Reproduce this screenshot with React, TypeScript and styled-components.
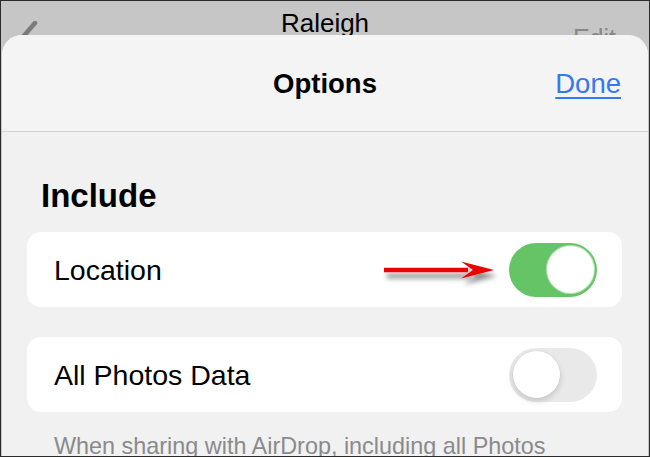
import React from "react";
import styled, { createGlobalStyle } from "styled-components";

const Global = createGlobalStyle`
  html, body { margin: 0; padding: 0; background: #ffffff; }
  #root { width: 650px; height: 457px; }
  * { box-sizing: border-box; }
`;

const Frame = styled.div`
  width: 650px;
  height: 457px;
  border: 1px solid #2b2b2b;
  background: #c6c6c6;
  overflow: hidden;
  display: flex;
  flex-direction: column;
  font-family: "Liberation Sans", Arial, sans-serif;
`;

const TopBar = styled.div`
  height: 34px;
  flex: none;
  overflow: hidden;
  display: grid;
  grid-template-columns: 1fr auto 1fr;
  align-items: start;
`;

const BackSlot = styled.div`
  padding: 20px 0 0 17px;
  display: flex;
`;

const BarTitle = styled.div`
  padding-top: 7px;
  font-size: 26px;
  line-height: 30px;
  color: #000;
`;

const BarAction = styled.div`
  justify-self: end;
  padding: 22px 33px 0 0;
  font-size: 25px;
  line-height: 30px;
  color: #868686;
`;

const Sheet = styled.div`
  flex: 1;
  margin: 0 1px;
  border-radius: 20px 20px 0 0;
  background: #f0f1f0;
  display: flex;
  flex-direction: column;
  overflow: hidden;
`;

const SheetHeader = styled.div`
  height: 97px;
  flex: none;
  background: #f4f4f4;
  border-bottom: 1px solid #d3d3d3;
  display: grid;
  grid-template-columns: 1fr auto 1fr;
  align-items: center;
`;

const SheetTitle = styled.div`
  grid-column: 2;
  font-size: 27.5px;
  font-weight: 700;
  color: #000;
  line-height: 34px;
  padding-top: 2px;
`;

const DoneLink = styled.a`
  justify-self: end;
  margin-right: 27px;
  padding-top: 2px;
  font-size: 27.5px;
  line-height: 34px;
  color: #3478f6;
  text-decoration: underline;
  text-decoration-thickness: 2px;
  text-underline-offset: 4px;
  cursor: pointer;
`;

const SheetBody = styled.div`
  padding: 44px 26px 0 25px;
  display: flex;
  flex-direction: column;
`;

const SectionTitle = styled.div`
  font-size: 33px;
  font-weight: 700;
  line-height: 40px;
  color: #000;
  padding-left: 14px;
  margin-bottom: 16px;
`;

const Card = styled.div<{ $gap?: number }>`
  height: 75px;
  background: #ffffff;
  border-radius: 14px;
  display: flex;
  align-items: center;
  padding: 0 25px 0 27px;
  margin-bottom: ${(p) => p.$gap ?? 0}px;
`;

const RowLabel = styled.div`
  flex: 1;
  font-size: 28.5px;
  line-height: 34px;
  color: #000;
`;

const Arrow = styled.svg`
  flex: none;
  margin-right: 9px;
  overflow: visible;
`;

const Track = styled.div<{ $on: boolean }>`
  flex: none;
  width: 88px;
  height: 54px;
  border-radius: 27px;
  padding: 3.5px;
  display: flex;
  justify-content: ${(p) => (p.$on ? "flex-end" : "flex-start")};
  background: ${(p) => (p.$on ? "#65c466" : "#e9e9ea")};
`;

const Knob = styled.div<{ $on: boolean }>`
  width: 47px;
  height: 47px;
  border-radius: 50%;
  background: #ffffff;
  box-shadow: ${(p) =>
    p.$on
      ? "0 0 0 1px rgba(255,255,255,0.5)"
      : "0 3px 6px rgba(0,0,0,0.16), 0 0 0 0.5px rgba(0,0,0,0.05)"};
`;

const Footnote = styled.div`
  margin-top: 20px;
  padding-left: 27px;
  font-size: 23.4px;
  line-height: 28px;
  color: #8a8a8e;
  white-space: nowrap;
`;

function Toggle({ on }: { on: boolean }) {
  return (
    <Track $on={on}>
      <Knob $on={on} />
    </Track>
  );
}

export default function App() {
  return (
    <>
      <Global />
      <Frame>
        <TopBar>
          <BackSlot>
            <svg width="24" height="34" viewBox="0 0 24 34">
              <path
                d="M17 2 L4 17 L17 32"
                fill="none"
                stroke="#7b7b7b"
                strokeWidth="4.5"
                strokeLinecap="round"
                strokeLinejoin="round"
              />
            </svg>
          </BackSlot>
          <BarTitle>Raleigh</BarTitle>
          <BarAction>Edit</BarAction>
        </TopBar>
        <Sheet>
          <SheetHeader>
            <SheetTitle>Options</SheetTitle>
            <DoneLink>Done</DoneLink>
          </SheetHeader>
          <SheetBody>
            <SectionTitle>Include</SectionTitle>
            <Card $gap={30}>
              <RowLabel>Location</RowLabel>
              <Arrow width="118" height="34" viewBox="0 0 118 34">
                <defs>
                  <filter id="arrowShadow" x="-10%" y="-50%" width="130%" height="250%">
                    <feDropShadow dx="3" dy="6" stdDeviation="2.5" floodColor="#000" floodOpacity="0.45" />
                  </filter>
                </defs>
                <g filter="url(#arrowShadow)">
                  <line x1="2" y1="17" x2="86" y2="17" stroke="#ee0000" strokeWidth="4.5" />
                  <polygon points="79,8.5 112,17 79,25.5 91,17" fill="#ee0000" />
                </g>
              </Arrow>
              <Toggle on={true} />
            </Card>
            <Card>
              <RowLabel>All Photos Data</RowLabel>
              <Toggle on={false} />
            </Card>
            <Footnote>When sharing with AirDrop, including all Photos</Footnote>
          </SheetBody>
        </Sheet>
      </Frame>
    </>
  );
}
